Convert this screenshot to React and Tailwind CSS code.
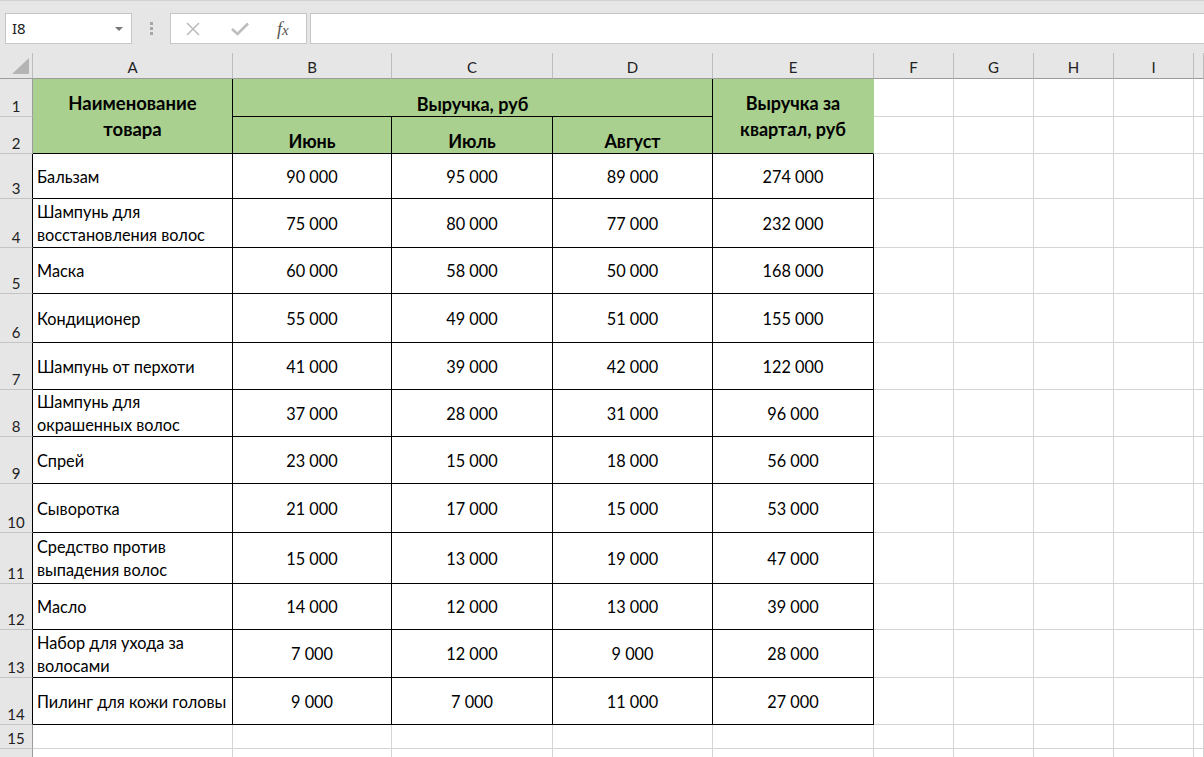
import React from "react";

const data = [
  [["Бальзам"], "90 000", "95 000", "89 000", "274 000"],
  [["Шампунь для", "восстановления волос"], "75 000", "80 000", "77 000", "232 000"],
  [["Маска"], "60 000", "58 000", "50 000", "168 000"],
  [["Кондиционер"], "55 000", "49 000", "51 000", "155 000"],
  [["Шампунь от перхоти"], "41 000", "39 000", "42 000", "122 000"],
  [["Шампунь для", "окрашенных волос"], "37 000", "28 000", "31 000", "96 000"],
  [["Спрей"], "23 000", "15 000", "18 000", "56 000"],
  [["Сыворотка"], "21 000", "17 000", "15 000", "53 000"],
  [["Средство против", "выпадения волос"], "15 000", "13 000", "19 000", "47 000"],
  [["Масло"], "14 000", "12 000", "13 000", "39 000"],
  [["Набор для ухода за", "волосами"], "7 000", "12 000", "9 000", "28 000"],
  [["Пилинг для кожи головы"], "9 000", "7 000", "11 000", "27 000"],
];

const letters = ["A", "B", "C", "D", "E", "F", "G", "H", "I", ""];

function RowHdr({ n, dark }) {
  return (
    <div
      className={
        "flex items-end justify-center bg-[#e6e6e6] border-b border-r border-b-[#c4c4c4] text-[15px] leading-[20px] text-[#222] " +
        (dark ? "border-r-[#000]" : "border-r-[#9b9b9b]")
      }
    >
      {n}
    </div>
  );
}

function Empty() {
  return <div className="border-b border-r border-[#d4d4d4] bg-white" />;
}

function Cell({ children, className = "" }) {
  return (
    <div className={"border-b border-r border-black bg-white flex items-center text-[16.3px] leading-[23px] text-black " + className}>
      {children}
    </div>
  );
}

export default function App() {
  const rows = [];
  data.forEach((r, i) => {
    const n = i + 3;
    rows.push(<RowHdr key={"h" + n} n={n} dark />);
    rows.push(
      <Cell key={"a" + n} className="pl-[4px]">
        <div>
          {r[0].map((l, j) => (
            <div key={j} className="whitespace-nowrap">{l}</div>
          ))}
        </div>
      </Cell>
    );
    for (let c = 1; c <= 4; c++) {
      rows.push(
        <Cell key={"c" + n + c} className="justify-center">
          {r[c]}
        </Cell>
      );
    }
    for (let c = 0; c < 5; c++) rows.push(<Empty key={"e" + n + c} />);
  });

  return (
    <div className="w-[1204px] h-[757px] overflow-hidden bg-white font-[Lato,sans-serif] text-black">
      {/* formula bar */}
      <div className="h-[53px] bg-[#e6e6e6] border-t border-[#d2d2d2] flex items-start pt-[12px] pl-[5px]">
        <div className="w-[127px] h-[31px] bg-white border border-[#c6c6c6] flex items-center justify-between pl-[6px] pr-[8px]">
          <span className="font-['Noto_Sans',sans-serif] text-[15px] text-[#222]">I8</span>
          <svg width="8" height="4" viewBox="0 0 8 4">
            <path d="M0 0 L8 0 L4 4 Z" fill="#777" />
          </svg>
        </div>
        <div className="w-[38px] h-[31px] flex flex-col items-center justify-center gap-[2px]">
          <div className="w-[3px] h-[3px] bg-[#a6a6a6]" />
          <div className="w-[3px] h-[3px] bg-[#a6a6a6]" />
          <div className="w-[3px] h-[3px] bg-[#a6a6a6]" />
        </div>
        <div className="w-[137px] h-[31px] bg-white border border-[#c6c6c6] flex items-center">
          <svg className="ml-[15px]" width="14" height="14" viewBox="0 0 14 14">
            <path d="M1 1 L13 13 M13 1 L1 13" stroke="#bdbdbd" strokeWidth="1.6" />
          </svg>
          <svg className="ml-[31px]" width="18" height="14" viewBox="0 0 18 14">
            <path d="M1 7 L6.5 12 L17 1.5" stroke="#bdbdbd" strokeWidth="2.6" fill="none" />
          </svg>
          <span className="ml-[28px] font-['Liberation_Serif',serif] italic text-[18px] text-[#555] leading-none">
            f<span className="text-[15px]">x</span>
          </span>
        </div>
        <div className="ml-[3px] flex-1 h-[31px] bg-white border border-r-0 border-[#c6c6c6]" />
      </div>

      {/* sheet */}
      <div className="grid grid-cols-[33px_200px_159px_161px_160px_161px_80px_80px_80px_80px_1fr] grid-rows-[26px_38px_37px_45px_49px_46px_49px_47px_47px_47px_49px_51px_46px_48px_47px_24px_24px]">
        {/* corner */}
        <div className="bg-[#e6e6e6] border-b border-r border-b-[#9b9b9b] border-r-[#bdbdbd] relative">
          <svg className="absolute left-[12px] top-[5px]" width="17" height="16" viewBox="0 0 17 16">
            <path d="M17 0 L17 16 L0 16 Z" fill="#b4b4b4" />
          </svg>
        </div>
        {letters.map((l, i) => (
          <div
            key={"L" + i}
            className="bg-[#e6e6e6] border-b border-r border-b-[#9b9b9b] border-r-[#bdbdbd] flex items-center justify-center pt-[4px] text-[15px] text-[#222]"
          >
            {l}
          </div>
        ))}

        {/* row 1 */}
        <RowHdr n={1} />
        <div className="row-span-2 bg-[#a9d08e] border-b border-r border-black flex items-center justify-center text-center font-bold text-[18.5px] leading-[26px]">
          <div>
            <div>Наименование</div>
            <div>товара</div>
          </div>
        </div>
        <div className="col-span-3 bg-[#a9d08e] border-b border-r border-black flex items-end justify-center font-bold text-[18px] leading-[24px]">
          Выручка, руб
        </div>
        <div className="row-span-2 bg-[#a9d08e] border-b border-r border-b-black border-r-[#a9d08e] flex items-center justify-center text-center font-bold text-[18px] leading-[26px]">
          <div>
            <div>Выручка за</div>
            <div>квартал, руб</div>
          </div>
        </div>
        <Empty />
        <Empty />
        <Empty />
        <Empty />
        <Empty />

        {/* row 2 */}
        <RowHdr n={2} />
        {["Июнь", "Июль", "Август"].map((m) => (
          <div
            key={m}
            className="bg-[#a9d08e] border-b border-r border-black flex items-end justify-center font-bold text-[18px] leading-[24px]"
          >
            {m}
          </div>
        ))}
        <Empty />
        <Empty />
        <Empty />
        <Empty />
        <Empty />

        {rows}

        {[15, 16].map((n) => (
          <React.Fragment key={"r" + n}>
            <RowHdr n={n} />
            {Array.from({ length: 10 }).map((_, i) => (
              <Empty key={i} />
            ))}
          </React.Fragment>
        ))}
      </div>
    </div>
  );
}
